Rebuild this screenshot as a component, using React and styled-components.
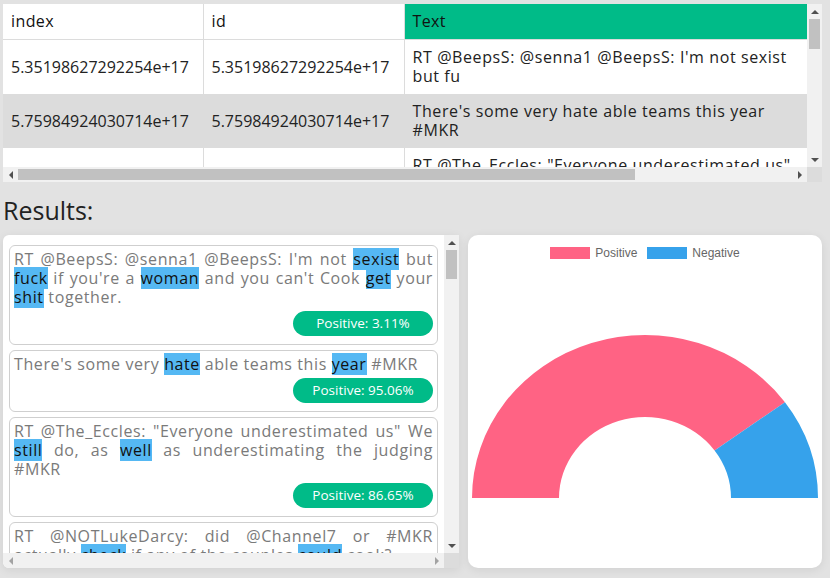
import React from 'react';
import styled, { createGlobalStyle, css } from 'styled-components';

const GlobalStyle = createGlobalStyle`
  html, body {
    margin: 0;
    padding: 0;
    background: #e2e2e2;
    font-family: 'Open Sans', 'Liberation Sans', sans-serif;
  }
`;

const Page = styled.div`
  width: 830px;
  height: 578px;
  box-sizing: border-box;
  padding: 4px 8px 0 3px;
  overflow: hidden;
`;

/* scroll frame: viewport + drawn scrollbars (classic Chrome look) */
const Frame = styled.div`
  display: grid;
  grid-template-columns: 1fr 15px;
  grid-template-rows: 1fr 15px;
  width: ${p => p.$w}px;
  height: ${p => p.$h}px;
  background: #fff;
  border-radius: ${p => p.$radius || '0'};
  overflow: hidden;
  box-shadow: ${p => (p.$shadow ? '0 2px 10px rgba(0, 0, 0, 0.08)' : 'none')};
`;

const Viewport = styled.div`
  overflow: hidden;
  padding: ${p => p.$pad || '0'};
  min-width: 0;
  min-height: 0;
`;

const Track = styled.div`
  background: #f1f1f1;
  display: flex;
  flex-direction: ${p => (p.$vertical ? 'column' : 'row')};
`;

const Corner = styled.div`
  background: #dcdcdc;
`;

const ArrowBtn = styled.div`
  flex: 0 0 15px;
  width: 15px;
  height: 15px;
  display: flex;
  align-items: center;
  justify-content: center;

  &::after {
    content: '';
    width: 0;
    height: 0;
    ${p => {
      const c = p.$disabled ? '#a3a3a3' : '#505050';
      switch (p.$dir) {
        case 'up':
          return css`border-left: 4px solid transparent; border-right: 4px solid transparent; border-bottom: 4px solid ${c};`;
        case 'down':
          return css`border-left: 4px solid transparent; border-right: 4px solid transparent; border-top: 4px solid ${c};`;
        case 'left':
          return css`border-top: 4px solid transparent; border-bottom: 4px solid transparent; border-right: 4px solid ${c};`;
        default:
          return css`border-top: 4px solid transparent; border-bottom: 4px solid transparent; border-left: 4px solid ${c};`;
      }
    }}
  }
`;

const Gutter = styled.div`
  flex: 1;
  display: flex;
  flex-direction: ${p => (p.$vertical ? 'column' : 'row')};
  ${p => (p.$vertical ? 'padding: 0 2px;' : 'padding: 2px 0;')}
`;

const Thumb = styled.div`
  background: #c1c1c1;
  flex: none;
`;

function ScrollBar({ vertical, thumb }) {
  return (
    <Track $vertical={vertical}>
      <ArrowBtn $dir={vertical ? 'up' : 'left'} $disabled={!thumb} />
      <Gutter $vertical={vertical}>
        {thumb && (
          <Thumb
            style={
              vertical
                ? { marginTop: thumb.start, height: thumb.size }
                : { marginLeft: thumb.start, width: thumb.size }
            }
          />
        )}
      </Gutter>
      <ArrowBtn $dir={vertical ? 'down' : 'right'} $disabled={!thumb} />
    </Track>
  );
}

const DataTable = styled.table`
  border-collapse: collapse;
  table-layout: fixed;
  width: 1008px;
  font-size: 16px;
  line-height: 19px;
  color: #222;
`;

const HeadCell = styled.th`
  text-align: left;
  font-weight: 400;
  color: #111;
  padding: 8px 8px;
  letter-spacing: 0.4px;
  background: ${p => (p.$active ? '#00bb88' : '#fff')};
  border-right: 1px solid #dcdcdc;
  border-bottom: 1px solid #dcdcdc;
`;

const Row = styled.tr`
  background: ${p => (p.$odd ? '#dcdcdc' : '#fff')};
`;

const Cell = styled.td`
  padding: 8px 8px;
  vertical-align: middle;
  border-right: 1px solid #dcdcdc;
  letter-spacing: ${p => (p.$text ? '0.6px' : '0')};
`;

const Heading = styled.h2`
  margin: 13px 0 10px;
  font-size: 25px;
  line-height: 30px;
  font-weight: 400;
  color: #222;
`;

const ResultsGrid = styled.div`
  display: grid;
  grid-template-columns: 456px 354px;
  column-gap: 9px;
  height: 333px;
`;

const Card = styled.div`
  border: 1px solid #cfcfcf;
  border-radius: 6px;
  padding: 4px 4px 8px;
  margin-bottom: 5px;
`;

const Tweet = styled.p`
  margin: 0;
  font-size: 16px;
  line-height: 19px;
  letter-spacing: 0.6px;
  color: #7a7a7a;
  text-align: justify;
`;

const Mark = styled.span`
  background: #55b8f3;
  color: #111;
`;

const BadgeRow = styled.div`
  display: flex;
  justify-content: flex-end;
  margin-top: 4px;
`;

const Badge = styled.span`
  width: 140px;
  height: 25px;
  line-height: 25px;
  border-radius: 13px;
  background: #00bb88;
  color: #fff;
  font-size: 13.5px;
  text-align: center;
`;

const ChartPanel = styled.div`
  background: #fff;
  border-radius: 10px;
  display: flex;
  flex-direction: column;
  box-shadow: 0 2px 10px rgba(0, 0, 0, 0.08);
`;

const Legend = styled.div`
  display: flex;
  justify-content: center;
  gap: 10px;
  padding-top: 11px;
  height: 13px;
  font-family: 'Liberation Sans', Arial, sans-serif;
  font-size: 12px;
  line-height: 12px;
  color: #666;
`;

const LegendItem = styled.span`
  display: flex;
  align-items: center;
  gap: 5px;
`;

const Swatch = styled.span`
  width: 40px;
  height: 12px;
  background: ${p => p.$color};
`;

const tableRows = [
  ['5.35198627292254e+17', "RT @BeepsS: @senna1 @BeepsS: I'm not sexist but fu", 'sexism'],
  ['5.75984924030714e+17', "There's some very hate able teams this year #MKR", 'none'],
  ['5.72342978255048e+17', 'RT @The_Eccles: "Everyone underestimated us" We still do', 'none'],
  ['5.72341498827522e+17', 'RT @NOTLukeDarcy: did @Channel7 or #MKR actually check', 'none'],
  ['5.74689873698107e+17', 'Kat and Andre are the worst #MKR', 'none'],
  ['5.73223862459449e+17', 'RT @mykitchenrules: Who will be cooking for their lives?', 'none'],
  ['5.75577145232654e+17', "Call me sexist but women shouldn't commentate sport", 'sexism'],
  ['5.72340476503724e+17', "Drasko they didn't cook half a bird you idiot #mkr", 'none'],
  ['5.72339962156548e+17', 'Hopefully someone cooks Drasko in the next ep of #mkr', 'none'],
  ['5.72353028130689e+17', "#mkr can't wait for the instant restaurant rounds", 'none'],
];

const results = [
  ["RT @BeepsS: @senna1 @BeepsS: I'm not [sexist] but [fuck] if you're a [woman] and you can't Cook [get] your [shit] together.", '3.11'],
  ["There's some very [hate] able teams this [year] #MKR", '95.06'],
  ['RT @The_Eccles: "Everyone underestimated us" We [still] do, as [well] as underestimating the judging #MKR', '86.65'],
  ['RT @NOTLukeDarcy: did @Channel7 or #MKR actually [check] if any of the couples [could] cook?', '91.42'],
  ['Kat and Andre are the [worst] #MKR', '12.37'],
  ['RT @mykitchenrules: Who will be cooking for their [lives] tonight? #MKR', '88.20'],
  ["Call me [sexist] but [women] shouldn't commentate sport", '4.58'],
  ["Drasko they [didn't] cook half a bird you [idiot] #mkr", '7.93'],
];

function renderTweet(text) {
  return text.split(/(\[[^\]]+\])/).map((part, i) =>
    part.startsWith('[') ? <Mark key={i}>{part.slice(1, -1)}</Mark> : part
  );
}

function HalfDoughnut() {
  const cx = 177, cy = 239, rx = 173, ry = 163, irx = 86, iry = 81;
  const a = (36 * Math.PI) / 180;
  const ox = cx + rx * Math.cos(a), oy = cy - ry * Math.sin(a);
  const ix = cx + irx * Math.cos(a), iy = cy - iry * Math.sin(a);
  const pink = `M ${cx - rx} ${cy} A ${rx} ${ry} 0 0 1 ${ox} ${oy} L ${ix} ${iy} A ${irx} ${iry} 0 0 0 ${cx - irx} ${cy} Z`;
  const blue = `M ${ox} ${oy} A ${rx} ${ry} 0 0 1 ${cx + rx} ${cy} L ${cx + irx} ${cy} A ${irx} ${iry} 0 0 0 ${ix} ${iy} Z`;
  return (
    <svg width="354" height="309" viewBox="0 0 354 309">
      <path d={pink} fill="#ff6384" />
      <path d={blue} fill="#36a2eb" />
    </svg>
  );
}

export default function App() {
  return (
    <Page>
      <GlobalStyle />
      <Frame $w={819} $h={178}>
        <Viewport>
          <DataTable>
            <colgroup>
              <col style={{ width: 200 }} />
              <col style={{ width: 201 }} />
              <col style={{ width: 403 }} />
              <col style={{ width: 204 }} />
            </colgroup>
            <thead>
              <tr>
                <HeadCell>index</HeadCell>
                <HeadCell>id</HeadCell>
                <HeadCell $active>Text</HeadCell>
                <HeadCell>Annotation</HeadCell>
              </tr>
            </thead>
            <tbody>
              {tableRows.map(([id, text, label], i) => (
                <Row key={i} $odd={i % 2 === 1}>
                  <Cell>{id}</Cell>
                  <Cell>{id}</Cell>
                  <Cell $text>{text}</Cell>
                  <Cell>{label}</Cell>
                </Row>
              ))}
            </tbody>
          </DataTable>
        </Viewport>
        <ScrollBar vertical thumb={{ start: 0, size: 30 }} />
        <ScrollBar thumb={{ start: 0, size: 617 }} />
        <Corner />
      </Frame>
      <Heading>Results:</Heading>
      <ResultsGrid>
        <Frame $w={456} $h={333} $radius="6px 0 0 6px" $shadow>
          <Viewport $pad="10px 6px">
            {results.map(([text, score], i) => (
              <Card key={i}>
                <Tweet>{renderTweet(text)}</Tweet>
                <BadgeRow>
                  <Badge>Positive: {score}%</Badge>
                </BadgeRow>
              </Card>
            ))}
          </Viewport>
          <ScrollBar vertical thumb={{ start: 0, size: 29 }} />
          <ScrollBar />
          <Corner />
        </Frame>
        <ChartPanel>
          <Legend>
            <LegendItem><Swatch $color="#ff6384" />Positive</LegendItem>
            <LegendItem><Swatch $color="#36a2eb" />Negative</LegendItem>
          </Legend>
          <HalfDoughnut />
        </ChartPanel>
      </ResultsGrid>
    </Page>
  );
}
